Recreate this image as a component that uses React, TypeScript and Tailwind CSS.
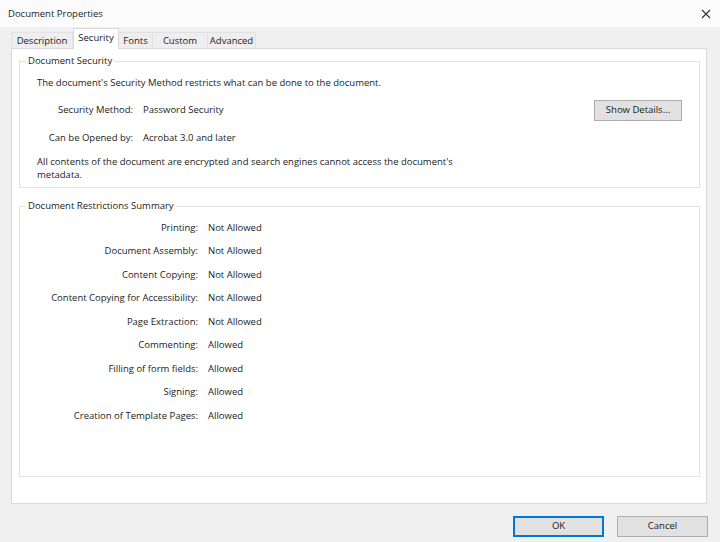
import React from "react";

const rows: [string, string][] = [
  ["Printing:", "Not Allowed"],
  ["Document Assembly:", "Not Allowed"],
  ["Content Copying:", "Not Allowed"],
  ["Content Copying for Accessibility:", "Not Allowed"],
  ["Page Extraction:", "Not Allowed"],
  ["Commenting:", "Allowed"],
  ["Filling of form fields:", "Allowed"],
  ["Signing:", "Allowed"],
  ["Creation of Template Pages:", "Allowed"],
];

const tabs = [
  { name: "Description", w: "w-[62px]" },
  { name: "Security", w: "w-[46px]", active: true },
  { name: "Fonts", w: "w-[34px]" },
  { name: "Custom", w: "w-[55px]" },
  { name: "Advanced", w: "w-[48px]" },
];

export default function App() {
  return (
    <div
      className="w-[720px] h-[542px] bg-[#f0f0f0] flex flex-col text-[9.5px] text-[#1b1b1b] overflow-hidden"
      style={{ fontFamily: '"Open Sans", "Noto Sans", sans-serif' }}
    >
      {/* Title bar */}
      <div className="h-[27px] bg-[#fbfbfb] flex items-center justify-between pl-[8px] pr-[9px] shrink-0">
        <span className="leading-[12px]">Document Properties</span>
        <svg width="10" height="10" viewBox="0 0 10 10" className="text-[#333]">
          <path d="M1 1 L9 9 M9 1 L1 9" stroke="currentColor" strokeWidth="1.1" />
        </svg>
      </div>

      {/* Tabs */}
      <div className="flex items-end h-[21px] pl-[11px] shrink-0">
        {tabs.map((t) =>
          t.active ? (
            <div
              key={t.name}
              className={`${t.w} h-[21px] -mb-px pb-[2px] bg-white border border-[#d9d9d9] border-b-0 flex items-center justify-center relative z-10`}
            >
              {t.name}
            </div>
          ) : (
            <div
              key={t.name}
              className={`${t.w} h-[16px] pt-px bg-[#eeeeee] border-t border-r border-[#e2e2e2] first:border-l flex items-center justify-center`}
            >
              {t.name}
            </div>
          )
        )}
      </div>

      {/* Panel */}
      <div className="ml-[11px] mr-[13px] h-[456px] bg-white border border-[#d9d9d9] pt-[6px] pl-[7px] pr-[6px] pb-[26px] flex flex-col shrink-0">
        <fieldset className="border border-[#e2e2e2] pb-[6px]">
          <legend className="ml-[6px] px-[2px] leading-[12px]">Document Security</legend>
          <div className="px-[17px]">
            <div className="mt-[10px] leading-[12px]">
              The document's Security Method restricts what can be done to the document.
            </div>
            <div className="mt-[11px] h-[21px] flex items-center">
              <span className="w-[96px] text-right">Security Method:</span>
              <span className="ml-[10px]">Password Security</span>
              <button className="ml-auto w-[88px] h-[21px] bg-[#e1e1e1] border border-[#adadad] flex items-center justify-center">
                Show Details...
              </button>
            </div>
            <div className="mt-[11px] h-[12px] flex items-center">
              <span className="w-[96px] text-right">Can be Opened by:</span>
              <span className="ml-[10px]">Acrobat 3.0 and later</span>
            </div>
            <div className="mt-[11px] leading-[13px] w-[440px]">
              All contents of the document are encrypted and search engines cannot access the document's metadata.
            </div>
          </div>
        </fieldset>

        <fieldset className="mt-[12px] flex-1 border border-[#e2e2e2] pt-[4px]">
          <legend className="ml-[6px] px-[2px] leading-[12px]">Document Restrictions Summary</legend>
          {rows.map(([k, v]) => (
            <div key={k} className="h-[23.5px] flex items-center">
              <span className="w-[178px] text-right">{k}</span>
              <span className="ml-[10px]">{v}</span>
            </div>
          ))}
        </fieldset>
      </div>

      {/* Buttons */}
      <div className="flex justify-end gap-[13px] pr-[12px] pt-[12px]">
        <button className="w-[91px] h-[21px] bg-[#e1e1e1] border-2 border-[#0078d7] flex items-center justify-center">
          OK
        </button>
        <button className="w-[91px] h-[21px] bg-[#e1e1e1] border border-[#adadad] flex items-center justify-center">
          Cancel
        </button>
      </div>
    </div>
  );
}
